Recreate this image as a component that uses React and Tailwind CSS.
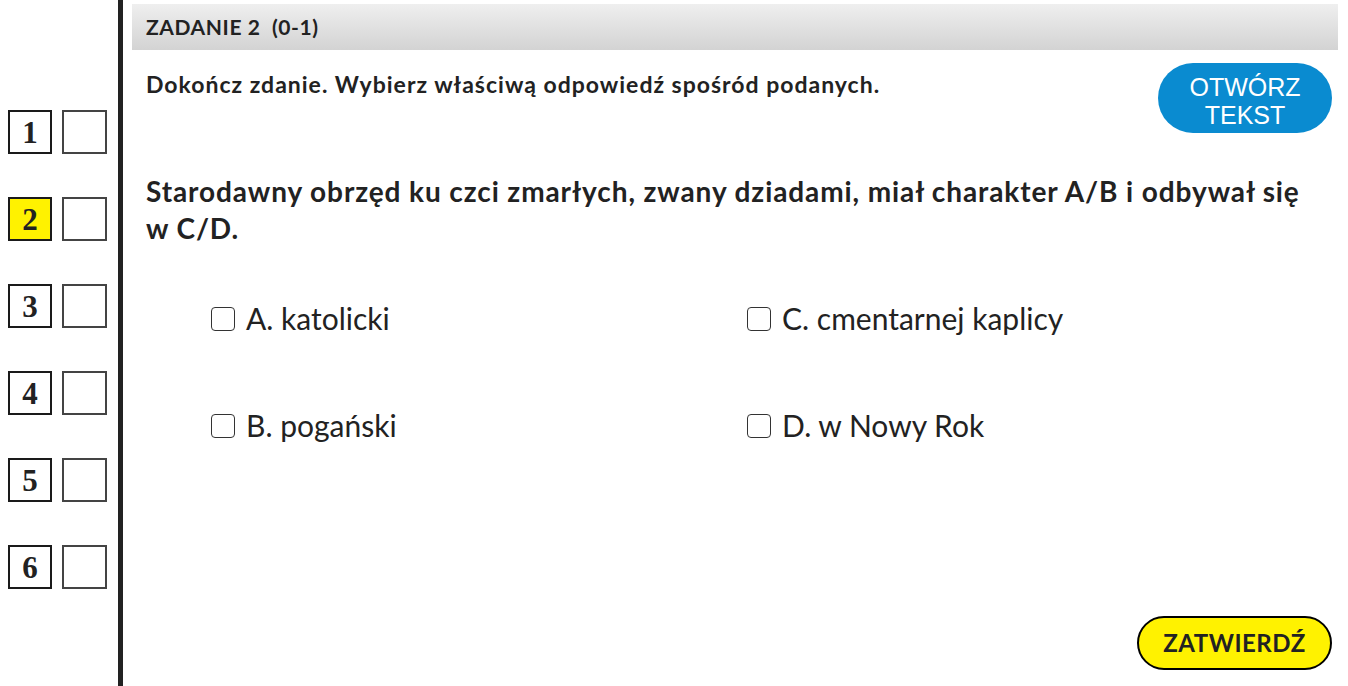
export default function App() {
  const nums = [1, 2, 3, 4, 5, 6];
  return (
    <div className="flex h-[686px] w-[1348px] bg-white font-['Lato','Noto_Sans',sans-serif] text-[#222]">
      <div className="w-[118px] shrink-0 pt-[110px] pl-[8px]">
        <div className="flex flex-col gap-[43px]">
          {nums.map((n) => (
            <div key={n} className="flex gap-[10px]">
              <div
                className={`flex h-[44px] w-[44px] items-center justify-center border-2 border-[#1a1a1a] font-['Liberation_Serif',serif] text-[31px] font-bold leading-none ${n === 2 ? "bg-[#fff200]" : "bg-white"}`}
              >
                {n}
              </div>
              <div className="h-[44px] w-[45px] border-2 border-[#444]" />
            </div>
          ))}
        </div>
      </div>
      <div className="w-[5px] shrink-0 bg-[#222]" />
      <div className="relative flex-1 pl-[9px] pr-[10px] pt-[4px]">
        <div className="flex h-[46px] items-center bg-gradient-to-b from-[#efefef] to-[#d3d3d3] pl-[14px] text-[21px] font-bold tracking-[0.6px]">
          ZADANIE 2&nbsp;&nbsp;(0-1)
        </div>
        <div className="flex items-start justify-between pl-[14px] pt-[13px]">
          <p className="pt-[4px] text-[23px] font-bold tracking-[1px]">Dokończ zdanie. Wybierz właściwą odpowiedź spośród podanych.</p>
          <button className="mr-[6px] flex h-[70px] w-[174px] flex-col items-center justify-center rounded-full bg-[#0a8bd0] pt-[5px] font-['Liberation_Sans',sans-serif] text-[25px] leading-[28px] text-white">
            <span>OTWÓRZ</span>
            <span>TEKST</span>
          </button>
        </div>
        <p className="mt-[40px] pl-[14px] pr-[20px] text-[28px] font-bold leading-[37px] tracking-[0.9px]">
          Starodawny obrzęd ku czci zmarłych, zwany dziadami, miał charakter A/B i odbywał się w C/D.
        </p>
        <div className="mt-[56px] grid grid-cols-[536px_1fr] gap-y-[76px] pl-[79px] text-[30px] leading-[31px]">
          {["A. katolicki", "C. cmentarnej kaplicy", "B. pogański", "D. w Nowy Rok"].map((t) => (
            <div key={t} className="flex items-center gap-[11px]">
              <span className="h-[24px] w-[24px] rounded-[4px] border-[1.5px] border-[#333] bg-white" />
              <span>{t}</span>
            </div>
          ))}
        </div>
        <button className="absolute bottom-[16px] right-[16px] flex h-[54px] w-[195px] items-center justify-center rounded-full border-2 border-black bg-[#fff200] text-[24px] font-bold tracking-[0.5px]">
          ZATWIERDŹ
        </button>
      </div>
    </div>
  );
}
